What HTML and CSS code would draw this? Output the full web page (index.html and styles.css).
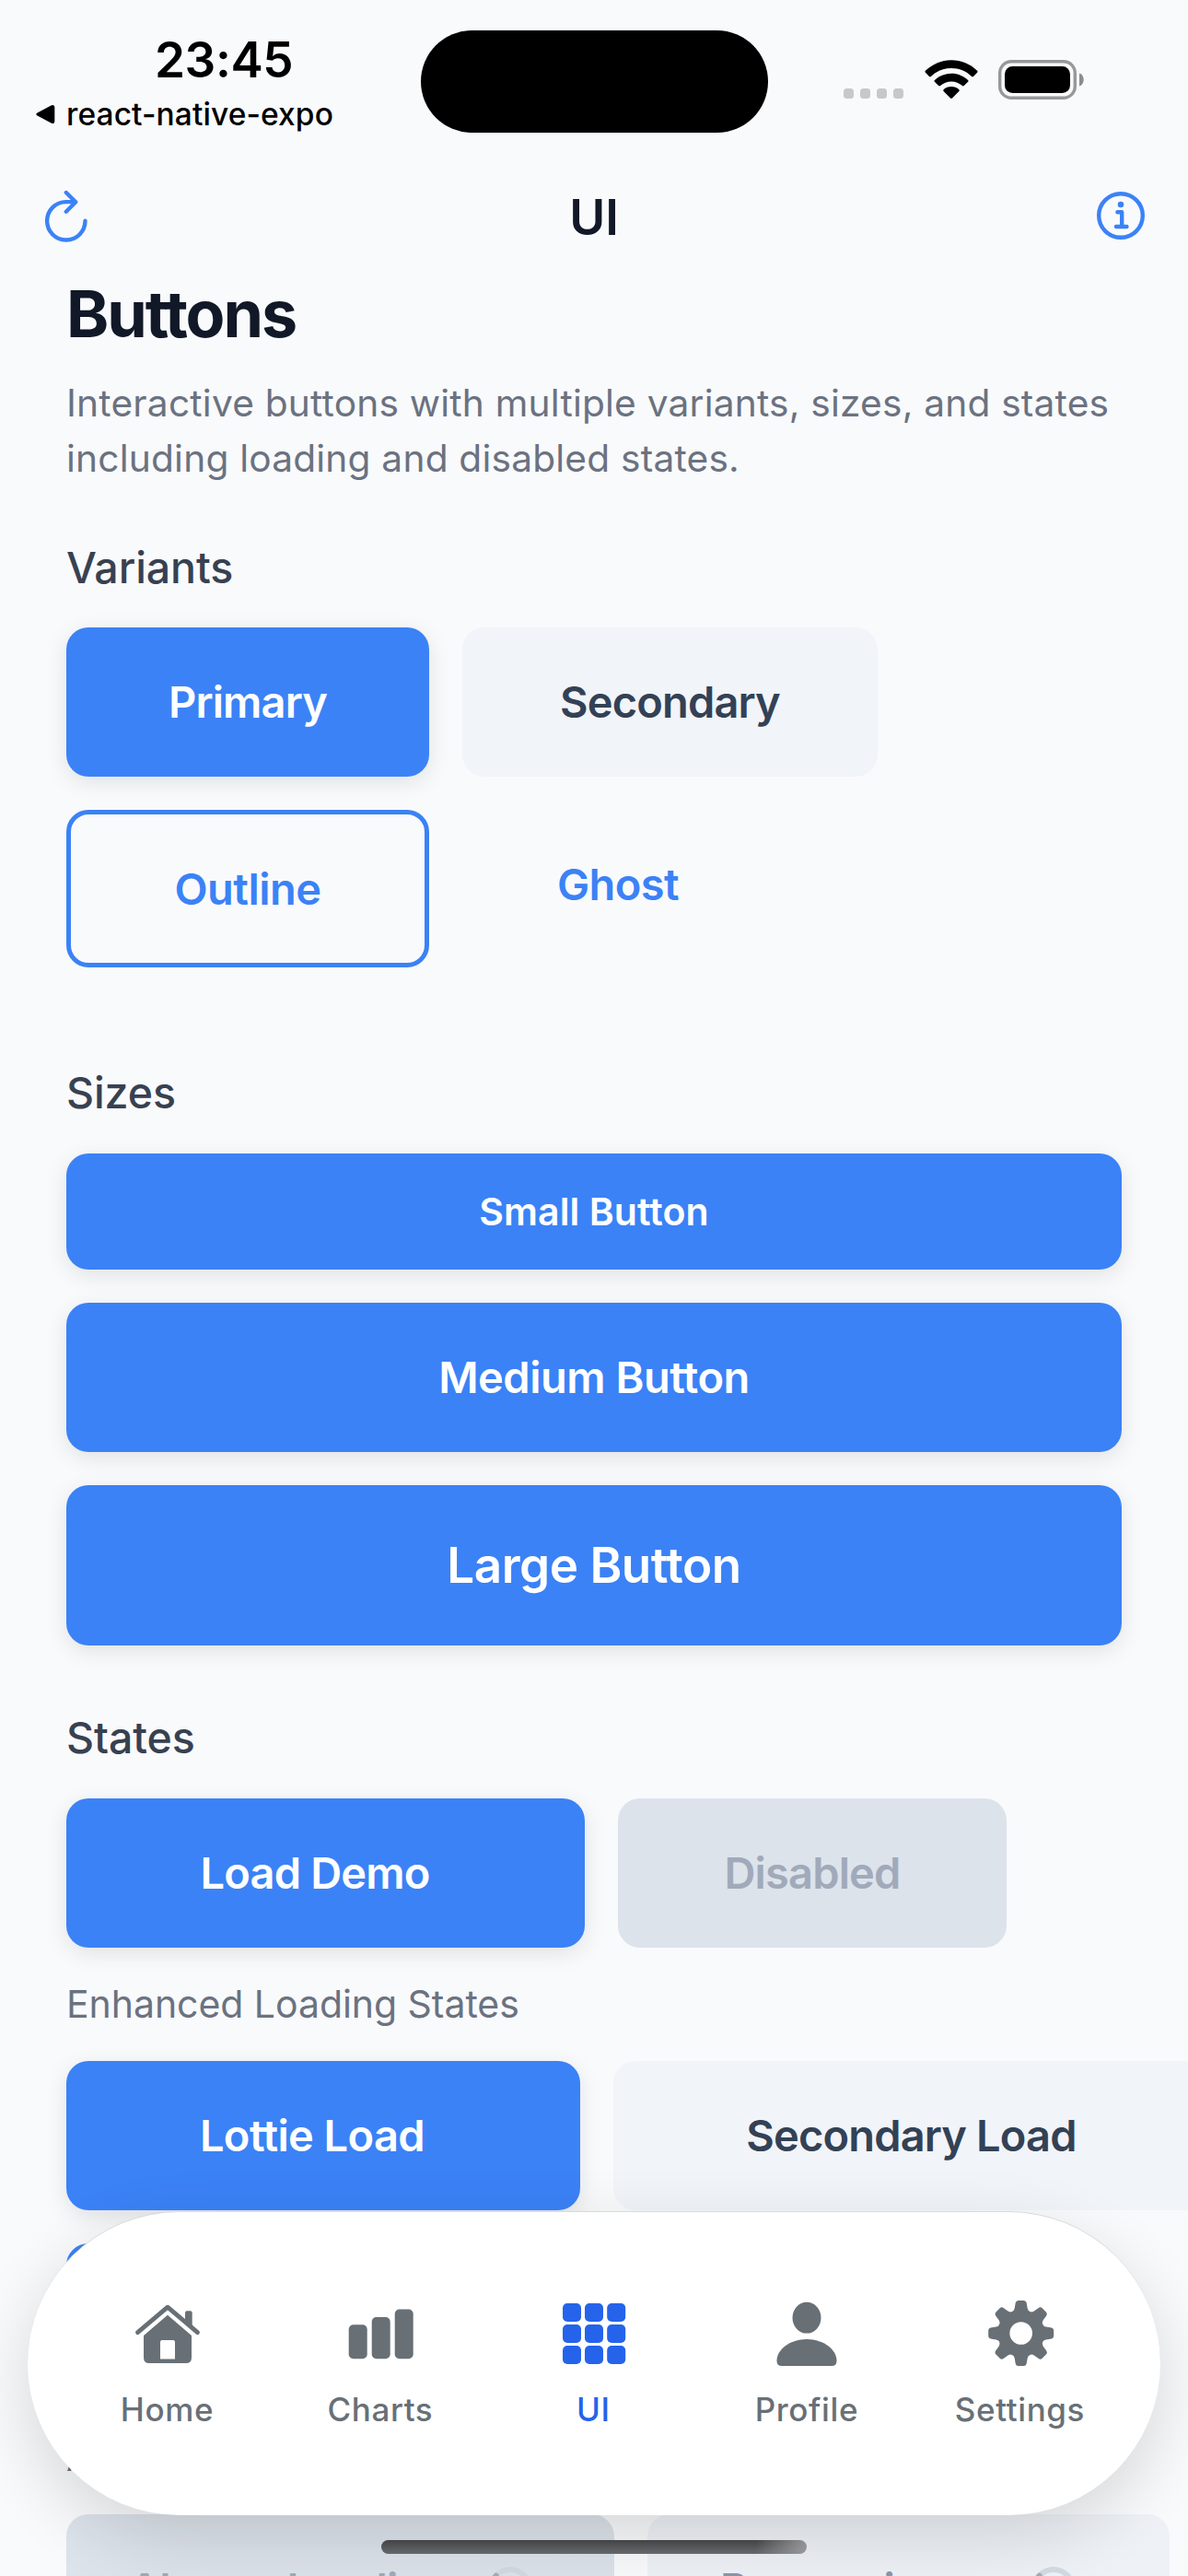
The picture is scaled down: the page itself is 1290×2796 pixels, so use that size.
FILE: index.html
```
<!DOCTYPE html>
<html lang="en">
<head>
<meta charset="utf-8">
<title>UI</title>
<link rel="stylesheet" href="styles.css">
</head>
<body>
<div class="screen">
  <header class="status">
    <div class="status-left">
      <div class="time">23:45</div>
      <div class="back">
        <svg width="22" height="22" viewBox="0 0 22 22"><path d="M2.500 9.500 18 1.200Q21.300 0 21.300 3.400V18.600Q21.300 22 18 20.800L2.500 12.500Q0 11 2.500 9.500Z"/></svg>
        <span>react-native-expo</span>
      </div>
    </div>
    <div class="island"></div>
    <div class="status-right">
      <div class="dots"><i></i><i></i><i></i><i></i></div>
      <svg class="wifi" width="58" height="43" viewBox="0 0 58 43">
        <path d="M29 .3C39.700.3 49.700 4.500 57.100 11.800Q58 12.800 57.100 13.700L53 18Q52 18.900 51.100 18C45.100 12.300 37.400 9.100 29 9.100S12.900 12.300 6.900 18Q6 18.900 5 18L.9 13.700Q0 12.800.9 11.800C8.300 4.500 18.300.3 29 .3Z"/>
        <path d="M29 14.700C36 14.700 42.300 17.400 47.100 21.900Q48 22.900 47.100 23.800L42.800 28.100Q41.900 28.900 41 28.100C37.700 25.200 33.500 23.400 29 23.400S20.300 25.200 17 28.100Q16.100 28.900 15.200 28.100L10.900 23.800Q10 22.900 10.900 21.900C15.700 17.400 22 14.700 29 14.700Z"/>
        <path d="M29 29C32.300 29 35.200 30.200 37.400 32.200Q38.300 33.200 37.400 34.100L30 41.600Q29 42.500 28 41.600L20.600 34.100Q19.700 33.200 20.600 32.200C22.800 30.200 25.700 29 29 29Z"/>
      </svg>
      <svg class="battery" width="94" height="43" viewBox="0 0 94 43">
        <rect x="1.700" y="1.700" width="81.600" height="39.600" rx="12.500" fill="none" stroke="#97989a" stroke-width="3.400"/>
        <rect x="7" y="7" width="71" height="29" rx="8.500"/>
        <path d="M88 14.500C94.300 16.500 94.300 26.500 88 28.500Z" fill="#8b8c8e"/>
      </svg>
    </div>
  </header>

  <div class="titlebar">
    <svg width="52" height="58" viewBox="-1 -.8 52 58" class="line-icon"><path d="M44.500 34A20.700 20.700 0 1 1 23.800 13.300H34M23.800 3.200 34.200 13.500 23.800 24"/></svg>
    <h1>UI</h1>
    <svg width="52" height="52" viewBox="0 0 52 52" class="line-icon"><circle cx="26" cy="26" r="23.800"/><path d="M22.400 22.200H27.200V37.500M21 38H32.500"/><circle cx="26" cy="14" r="3.300" class="dot"/></svg>
  </div>

  <main>
    <h2>Buttons</h2>
    <p class="intro">Interactive buttons with multiple variants, sizes, and states<br>including loading and disabled states.</p>

    <h3 class="h-variants">Variants</h3>
    <div class="row">
      <button class="btn primary w-primary"><span>Primary</span></button>
      <button class="btn secondary w-secondary"><span>Secondary</span></button>
    </div>
    <div class="row second">
      <button class="btn outline w-primary"><span>Outline</span></button>
      <button class="btn ghost w-ghost"><span>Ghost</span></button>
    </div>

    <h3 class="h-sizes">Sizes</h3>
    <div class="stack">
      <button class="btn primary small"><span>Small Button</span></button>
      <button class="btn primary medium"><span>Medium Button</span></button>
      <button class="btn primary large"><span>Large Button</span></button>
    </div>

    <h3 class="h-states">States</h3>
    <div class="row">
      <button class="btn primary w-load"><span>Load Demo</span></button>
      <button class="btn disabled w-disabled"><span>Disabled</span></button>
    </div>

    <h4>Enhanced Loading States</h4>
    <div class="row">
      <button class="btn primary w-lottie"><span>Lottie Load</span></button>
      <button class="btn secondary w-second-load"><span>Secondary Load</span></button>
    </div>
    <div class="row second">
      <button class="btn outline w-lottie"></button>
    </div>
    <h4>A</h4>
    <div class="row">
      <button class="btn disabled w-always"><span>Always Loading</span><svg width="48" height="48" viewBox="0 0 48 48" class="spinner"><circle cx="24" cy="24" r="21"/><path d="M3 24A21 21 0 0 1 8.600 9.700"/></svg></button>
      <button class="btn busy w-processing"><span>Processing</span><svg width="48" height="48" viewBox="0 0 48 48" class="spinner"><circle cx="24" cy="24" r="21"/><path d="M3 24A21 21 0 0 1 8.600 9.700"/></svg></button>
    </div>
  </main>

  <nav class="tabs">
    <a class="tab">
      <svg width="80" height="88" viewBox="0 0 80 88"><path d="M7.500 38.700 40 11.200 72.500 38.700" fill="none" stroke="currentColor" stroke-width="4.800" stroke-linecap="round" stroke-linejoin="round"/><path d="M59 28V17.500Q59 15.300 61 15.300H64.700Q66.700 15.300 66.700 17.500V36Z"/><path fill-rule="evenodd" d="M40 19.800 66 42V66Q66 72 60 72H20Q14 72 14 66V42ZM34 47Q32 47 32 49V67.500H48V49Q48 47 46 47Z"/></svg>
      <span>Home</span>
    </a>
    <a class="tab">
      <svg width="80" height="88" viewBox="0 0 80 88"><rect x="5.700" y="30.300" width="20" height="37" rx="5"/><rect x="30.700" y="22" width="20" height="45.300" rx="5"/><rect x="55.700" y="13.500" width="20" height="53.800" rx="5"/></svg>
      <span>Charts</span>
    </a>
    <a class="tab active">
      <svg width="80" height="88" viewBox="0 0 80 88"><rect x="6" y="7" width="20" height="20" rx="5"/><rect x="30" y="7" width="20" height="20" rx="5"/><rect x="54.200" y="7" width="20" height="20" rx="5"/><rect x="6" y="30" width="20" height="20" rx="5"/><rect x="30" y="30" width="20" height="20" rx="5"/><rect x="54.200" y="30" width="20" height="20" rx="5"/><rect x="6" y="53" width="20" height="20" rx="5"/><rect x="30" y="53" width="20" height="20" rx="5"/><rect x="54.200" y="53" width="20" height="20" rx="5"/></svg>
      <span>UI</span>
    </a>
    <a class="tab">
      <svg width="80" height="88" viewBox="0 0 80 88"><ellipse cx="40" cy="22.700" rx="15.500" ry="16.900"/><path d="M40 46C58 46 72.500 57 72.500 69.500Q72.500 75 67 75H13Q7.500 75 7.500 69.500C7.500 57 22 46 40 46Z"/></svg>
      <span>Profile</span>
    </a>
    <a class="tab">
      <svg width="80" height="88" viewBox="0 0 80 88"><g transform="translate(40.700 39.500)"><path id="tooth" d="M-10-23Q-7.500-24.500-7-27L-6-33Q-5.400-35.500-3-35.500H3Q5.400-35.500 6-33L7-27Q7.500-24.500 10-23Z"/><use href="#tooth" transform="rotate(45)"/><use href="#tooth" transform="rotate(90)"/><use href="#tooth" transform="rotate(135)"/><use href="#tooth" transform="rotate(180)"/><use href="#tooth" transform="rotate(225)"/><use href="#tooth" transform="rotate(270)"/><use href="#tooth" transform="rotate(315)"/><circle r="18.800" fill="none" stroke="currentColor" stroke-width="13"/></g></svg>
      <span>Settings</span>
    </a>
  </nav>
  <div class="home-indicator"></div>
</div>
</body>
</html>
```
FILE: styles.css
```
* { box-sizing: border-box; }
body { margin: 0; background: #f9fafc; font-family: Inter, "Liberation Sans", sans-serif; }
.screen { position: relative; width: 1290px; height: 2796px; overflow: hidden; background: #f9fafc; color: #111827; }
svg { display: block; fill: currentColor; flex: none; }
span { white-space: nowrap; }

.status { height: 177px; display: flex; color: #000; }
.status-left { width: 456.500px; padding-top: 33px; }
.time { padding-left: 168px; font-size: 53px; line-height: 64px; font-weight: 600; letter-spacing: -.4px; }
.back { display: flex; align-items: center; gap: 12px; padding-left: 38px; height: 54px; font-size: 33.500px; font-weight: 500; letter-spacing: .1px; }
.island { width: 377px; height: 111px; margin-top: 33px; border-radius: 56px; background: #000; }
.status-right { display: flex; align-items: flex-start; padding: 65px 0 0 82.500px; }
.dots { display: flex; gap: 7px; padding-top: 31px; }
.dots i { width: 11px; height: 11px; border-radius: 3.500px; background: #c7c8ca; }
.wifi { margin-left: 22.500px; }
.battery { margin-left: 22px; }

.titlebar { height: 114px; padding: 0 47px; display: flex; align-items: center; justify-content: space-between; }
.titlebar h1 { margin: 0; padding-top: 4px; font-size: 53px; font-weight: 600; line-height: 60px; }
.line-icon { fill: none; stroke: #3b82f6; stroke-width: 4.400; stroke-linecap: round; stroke-linejoin: round; }
.line-icon .dot { fill: #3b82f6; stroke: none; }

main { padding: 0 72px; }
h2 { margin: 10px 0 0; font-size: 70px; line-height: 80px; font-weight: 700; letter-spacing: -2.100px; }
.intro { margin: 27px 0 0; font-size: 40.700px; line-height: 60px; color: #6b7280; letter-spacing: .19px; white-space: nowrap; }
h3 { margin: 0; font-size: 46.500px; line-height: 60px; font-weight: 500; color: #374151; letter-spacing: -.1px; }
h4 { margin: 36px 0; font-size: 41px; line-height: 51px; font-weight: 400; color: #6b7280; letter-spacing: -.05px; }
.h-variants { margin-top: 58px; }
.h-sizes { margin-top: 106px; }
.h-states { margin-top: 70px; }
.row { display: flex; align-items: flex-start; gap: 36px; }
.h-variants + .row { margin-top: 35px; }
.h-sizes + .stack, .h-states + .row, .second { margin-top: 36px; }
.stack { display: flex; flex-direction: column; gap: 36px; }

.btn { flex: none; height: 162px; padding: 0; border: 0; border-radius: 24px; display: flex; align-items: center; justify-content: center; font: 600 47px/60px Inter, "Liberation Sans", sans-serif; letter-spacing: -.85px; color: #fff; }
.primary { background: #3b82f6; box-shadow: 0 6px 24px rgba(0,0,0,.1); }
.secondary { background: #f1f4f9; color: #334155; }
.outline { height: 171px; border: 5px solid #3b82f6; background: transparent; color: #3b82f6; letter-spacing: -.5px; }
.ghost { background: transparent; color: #3b82f6; letter-spacing: -.6px; }
.disabled { background: #dde3eb; color: #a0aaba; }
.busy { background: #eef2f7; color: #8c97a8; }
.small { height: 126px; font-size: 41px; letter-spacing: .1px; }
.medium { letter-spacing: -.5px; }
.large { height: 174px; font-size: 53px; letter-spacing: -.5px; }
.w-primary { width: 394px; }
.w-secondary { width: 451px; }
.w-ghost { width: 338px; }
.w-load { width: 563px; padding-right: 23px; }
.w-disabled { width: 422px; }
.w-lottie { width: 558px; padding-right: 24px; letter-spacing: -.6px; }
.w-second-load { width: 647px; }
.w-always { width: 595px; padding: 0 89px 0 68px; justify-content: space-between; }
.w-processing { width: 567px; padding: 0 102px 0 79px; justify-content: space-between; }
.spinner { fill: none; stroke: #d3dae3; stroke-width: 6; stroke-linecap: round; }
.spinner path { stroke: #a3adbd; }

.tabs { position: absolute; left: 30px; top: 2400px; width: 1230px; height: 330px; padding: 0 36.800px 0 35.700px; border-radius: 165px; background: #fff; border-top: 1px solid #d8d9db; box-shadow: 0 24px 72px rgba(0,0,0,.14); display: grid; grid-template-columns: repeat(5, 1fr); }
.tab { padding-top: 92px; display: flex; flex-direction: column; align-items: center; gap: 12px; color: #687076; font-size: 35px; line-height: 44px; font-weight: 500; letter-spacing: .6px; }
.tab svg { margin-left: 1px; }
.active { color: #2563eb; }
.home-indicator { position: absolute; left: 414px; top: 2757px; width: 462px; height: 15px; border-radius: 8px; background: linear-gradient(90deg, transparent 88%, rgba(165,166,168,.8)), linear-gradient(#424345, #68696c); }
```
